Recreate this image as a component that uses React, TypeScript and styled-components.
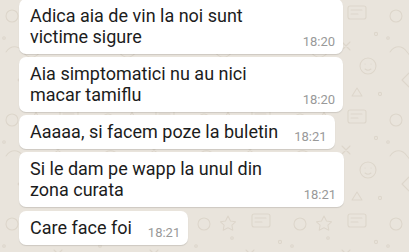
import { FC } from 'react'
import styled, { createGlobalStyle } from 'styled-components'

interface BubbleProps {
  readonly width?: number
}

type Message = {
  text: string
  time: string
  width?: number
}

const messages: Message[] = [
  { text: 'Adica aia de vin la noi sunt\nvictime sigure', time: '18:20', width: 324 },
  { text: 'Aia simptomatici nu au nici\nmacar tamiflu', time: '18:20', width: 324 },
  { text: 'Aaaaa, si facem poze la buletin', time: '18:21' },
  { text: 'Si le dam pe wapp la unul din\nzona curata', time: '18:21', width: 325 },
  { text: 'Care face foi', time: '18:21' },
]

// faint wallpaper doodles
const doodles = `<svg xmlns='http://www.w3.org/2000/svg' width='96' height='104' fill='none' stroke='#ddd6cb' stroke-width='1.1' stroke-linecap='round' stroke-linejoin='round'><circle cx='12' cy='16' r='6'/><path d='M36 8l2.5 5 5 .8-3.6 3.4.9 5-4.8-2.5-4.8 2.5.9-5-3.6-3.4 5-.8z'/><rect x='60' y='6' width='18' height='13' rx='2'/><path d='M63 10h11M63 14h7'/><circle cx='88' cy='34' r='1.6'/><path d='M6 52c5-7 12-7 17 0s12 7 17 0'/><path d='M54 42l8 8M62 42l-8 8'/><circle cx='80' cy='66' r='8'/><path d='M77 64h.1M83 64h.1M77 69c2 1.6 4 1.6 6 0'/><path d='M18 80l7-7 7 7-7 7z'/><circle cx='50' cy='82' r='2.5'/><path d='M64 96l5-8 5 8z'/><circle cx='92' cy='94' r='1.6'/><circle cx='40' cy='30' r='1.3'/><circle cx='4' cy='38' r='1.3'/></svg>`

const GlobalStyle = createGlobalStyle`
  html,
  body {
    margin: 0;
    padding: 0;
    height: 100%;
    overflow: hidden;
  }

  body {
    background-color: #e9e4dc;
    background-image: url("data:image/svg+xml,${doodles.replace(/#/g, '%23')}");
    font-family: Roboto, 'Noto Sans', sans-serif;
  }
`

const Chat = styled.div`
  display: flex;
  flex-direction: column;
  align-items: flex-start;
  gap: 3.3px;
  margin-top: -1.5px;
  padding-left: 19px;
`

const Bubble = styled.div<BubbleProps>`
  align-items: flex-end;
  background: #ffffff;
  border-radius: 7px;
  box-shadow: 0 1px 1px rgba(0, 0, 0, 0.12);
  box-sizing: border-box;
  display: flex;
  gap: 16px;
  padding: 6px 8px 5px 11px;
  width: ${(props) => (props.width ? `${props.width}px` : 'auto')};
`

const Text = styled.div`
  color: #1c1c1c;
  flex: 1;
  font-size: 18px;
  line-height: 21px;
  margin-bottom: 2px;
  white-space: pre-line;
`

const Time = styled.span`
  color: #999999;
  flex-shrink: 0;
  font-size: 13px;
  line-height: 15px;
`

const App: FC = () => (
  <>
    <GlobalStyle />
    <Chat>
      {messages.map((message, i) => (
        <Bubble key={i} width={message.width}>
          <Text>{message.text}</Text>
          <Time>{message.time}</Time>
        </Bubble>
      ))}
    </Chat>
  </>
)

export default App
